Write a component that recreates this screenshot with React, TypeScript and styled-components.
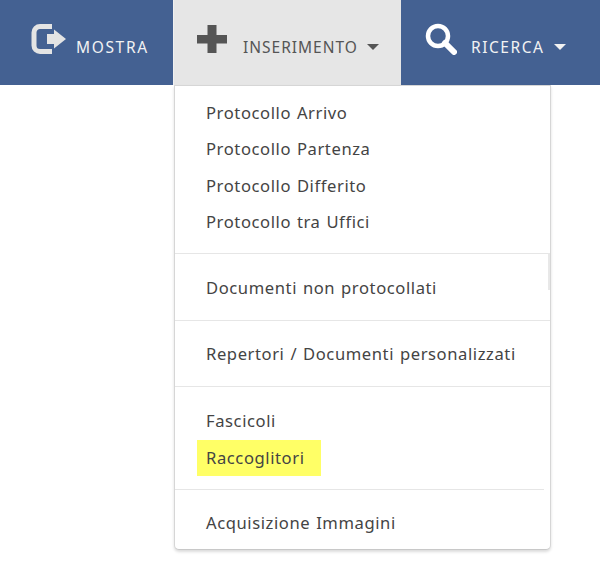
import React from "react";
import styled, { createGlobalStyle } from "styled-components";

const Global = createGlobalStyle`
  html, body { margin: 0; padding: 0; background: #fff; }
  body { font-family: "Noto Sans", "DejaVu Sans", sans-serif; width: 600px; height: 568px; overflow: hidden; }
`;

const NavBar = styled.nav`
  display: grid;
  grid-template-columns: 173px 228px 199px;
  height: 85px;
  background: #446192;
`;

const NavItem = styled.div<{ $active?: boolean; $pad: number }>`
  display: flex;
  align-items: center;
  padding-left: ${(p) => p.$pad}px;
  background: ${(p) => (p.$active ? "#e6e6e6" : "transparent")};
  color: ${(p) => (p.$active ? "#555" : "#f2f2f2")};
  border-left: ${(p) => (p.$active ? "1px solid #f0f0f0" : "0")};
`;

const NavIcon = styled.svg<{ $gap: number }>`
  flex: none;
  margin-right: ${(p) => p.$gap}px;
  margin-top: -8px;
`;

const NavLabel = styled.span<{ $track: number }>`
  font-size: 15.5px;
  letter-spacing: ${(p) => p.$track}px;
  margin-top: 9px;
  line-height: 20px;
`;

const Caret = styled.i`
  width: 0;
  height: 0;
  margin-left: 9px;
  margin-top: 9px;
  border-left: 6px solid transparent;
  border-right: 6px solid transparent;
  border-top: 6px solid currentColor;
`;

const Menu = styled.div`
  position: relative;
  box-sizing: border-box;
  width: 377px;
  height: 465px;
  margin-left: 174px;
  padding: 9px 0 0;
  background: #fff;
  border: 1px solid #d6d6d6;
  border-bottom-color: #c8c8c8;
  border-radius: 0 0 5px 5px;
  box-shadow: 0 2px 3px rgba(0, 0, 0, 0.14);
`;

const Group = styled.div`
  display: flex;
  flex-direction: column;
  align-items: flex-start;
`;

const Item = styled.div<{ $mark?: boolean }>`
  height: 36.4px;
  line-height: 36.4px;
  margin-left: ${(p) => (p.$mark ? 22 : 31)}px;
  padding: 0 ${(p) => (p.$mark ? 16 : 0)}px 0 ${(p) => (p.$mark ? 9 : 0)}px;
  background: ${(p) => (p.$mark ? "#ffff66" : "transparent")};
  color: #444;
  font-size: 16.6px;
  letter-spacing: 0.58px;
  word-spacing: 1px;
  white-space: nowrap;
`;

const Divider = styled.div<{ $short?: boolean; $before: number; $after: number }>`
  height: 1px;
  margin: ${(p) => p.$before}px ${(p) => (p.$short ? 6 : 0)}px ${(p) => p.$after}px 0;
  background: #e6e6e6;
`;

const ScrollThumb = styled.div`
  position: absolute;
  top: 167px;
  right: 0;
  width: 2px;
  height: 37px;
  background: #e8e8e8;
`;

export default function App() {
  return (
    <>
      <Global />
      <NavBar>
        <NavItem $pad={31}>
          <NavIcon $gap={9} width="36" height="32" viewBox="0 0 36 32">
            <path d="M21 3.500H9a6 6 0 0 0-6 6v13a6 6 0 0 0 6 6h12" fill="none" stroke="#e4e4e4" strokeWidth="5" />
            <path d="M16 11h7V6.500L35 16 23 25.500V21h-7z" fill="#e4e4e4" />
          </NavIcon>
          <NavLabel $track={1.65}>MOSTRA</NavLabel>
        </NavItem>
        <NavItem $active $pad={23}>
          <NavIcon $gap={16} width="30" height="28" viewBox="0 0 30 28">
            <path d="M10.500 0h9v10H30v8.500H19.500V28h-9V18.500H0V10h10.500z" fill="#555" />
          </NavIcon>
          <NavLabel $track={1}>INSERIMENTO</NavLabel>
          <Caret />
        </NavItem>
        <NavItem $pad={24}>
          <NavIcon $gap={14} width="32" height="32" viewBox="0 0 32 32">
            <circle cx="13" cy="13" r="10" fill="none" stroke="#fff" strokeWidth="4.500" />
            <path d="M20 20l9 9" stroke="#fff" strokeWidth="6" strokeLinecap="round" />
          </NavIcon>
          <NavLabel $track={1.55}>RICERCA</NavLabel>
          <Caret />
        </NavItem>
      </NavBar>
      <Menu>
        <Group>
          <Item>Protocollo Arrivo</Item>
          <Item>Protocollo Partenza</Item>
          <Item>Protocollo Differito</Item>
          <Item>Protocollo tra Uffici</Item>
        </Group>
        <Divider $before={12} $after={16} />
        <Group>
          <Item>Documenti non protocollati</Item>
        </Group>
        <Divider $before={14} $after={15} />
        <Group>
          <Item>Repertori / Documenti personalizzati</Item>
        </Group>
        <Divider $before={14} $after={16} />
        <Group>
          <Item>Fascicoli</Item>
          <Item $mark>Raccoglitori</Item>
        </Group>
        <Divider $short $before={13} $after={15} />
        <Group>
          <Item>Acquisizione Immagini</Item>
        </Group>
        <ScrollThumb />
      </Menu>
    </>
  );
}
